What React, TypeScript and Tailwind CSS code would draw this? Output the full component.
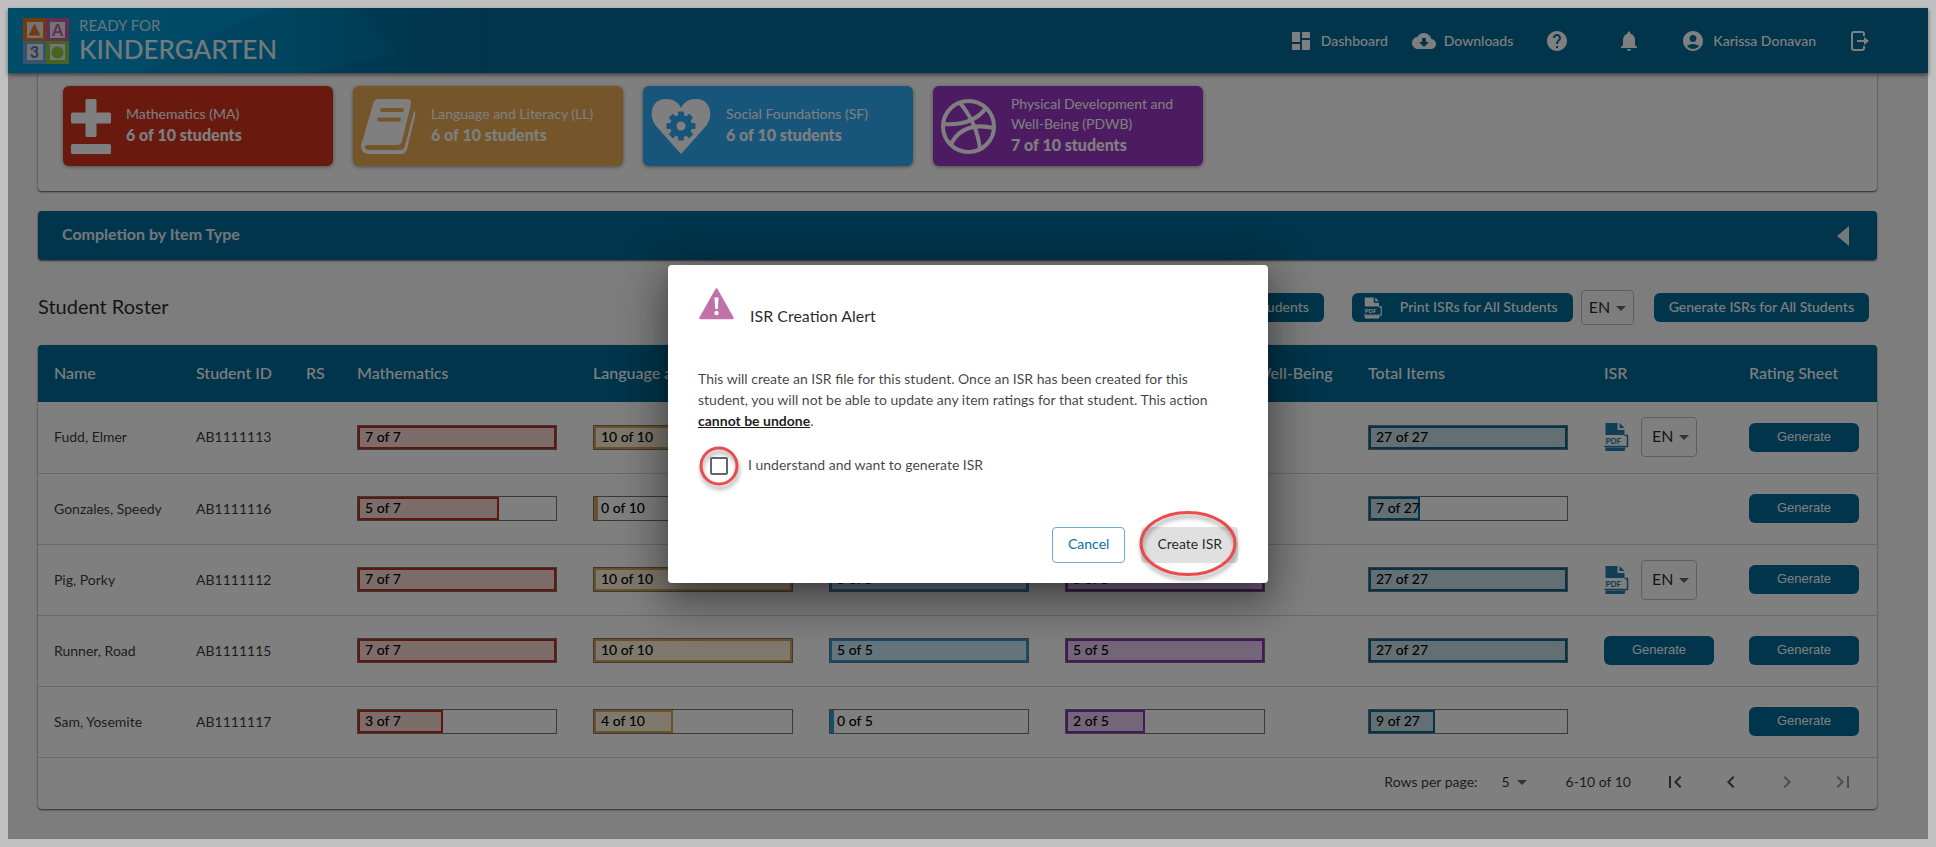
import { useState } from "react";
import {
  MdAccountCircle,
  MdArrowDropDown,
  MdChevronLeft,
  MdChevronRight,
  MdCloudDownload,
  MdDashboard,
  MdFirstPage,
  MdHelp,
  MdLastPage,
  MdNotifications,
} from "react-icons/md";

type Tone = "red" | "gold" | "sky" | "purple" | "navy";

const toneClass: Record<Tone, string> = {
  red: "border-[#bf311d] bg-[#f8d8d5]",
  gold: "border-[#dba350] bg-[#fdf0da]",
  sky: "border-[#2a9ad8] bg-[#cde8f9]",
  purple: "border-[#8a2fb8] bg-[#e6cdf3]",
  navy: "border-[#006a96] bg-[#c8dfe8]",
};

interface Student {
  name: string;
  id: string;
  scores: [number, number][];
  isr: "file" | "generate" | "none";
}

const students: Student[] = [
  { name: "Fudd, Elmer", id: "AB1111113", scores: [[7, 7], [10, 10], [5, 5], [5, 5], [27, 27]], isr: "file" },
  { name: "Gonzales, Speedy", id: "AB1111116", scores: [[5, 7], [0, 10], [0, 5], [2, 5], [7, 27]], isr: "none" },
  { name: "Pig, Porky", id: "AB1111112", scores: [[7, 7], [10, 10], [5, 5], [5, 5], [27, 27]], isr: "file" },
  { name: "Runner, Road", id: "AB1111115", scores: [[7, 7], [10, 10], [5, 5], [5, 5], [27, 27]], isr: "generate" },
  { name: "Sam, Yosemite", id: "AB1111117", scores: [[3, 7], [4, 10], [0, 5], [2, 5], [9, 27]], isr: "none" },
];

const tones: Tone[] = ["red", "gold", "sky", "purple", "navy"];

const columns = [
  { label: "Name", width: "" },
  { label: "Student ID", width: "w-[110px]" },
  { label: "RS", width: "w-[51px]" },
  { label: "Mathematics", width: "w-[236px]" },
  { label: "Language and Literacy", width: "w-[236px]" },
  { label: "Social Foundations", width: "w-[236px]" },
  { label: "Physical Development and Well-Being", width: "w-[303px]" },
  { label: "Total Items", width: "w-[236px]" },
  { label: "ISR", width: "w-[145px]" },
  { label: "Rating Sheet", width: "w-[144px]" },
];

function Logo() {
  return (
    <a href="#" className="flex items-center gap-[10px] text-white">
      <svg width="46" height="46" viewBox="0 0 46 46" aria-hidden="true">
        <rect width="23" height="23" fill="#e87722" />
        <rect x="23" width="23" height="23" fill="#c15fa5" />
        <rect y="23" width="23" height="23" fill="#6fa8dc" />
        <rect x="23" y="23" width="23" height="23" fill="#8dc63f" />
        <rect x="4" y="4" width="16" height="16" fill="#e8e8e8" />
        <rect x="27" y="4" width="15" height="16" fill="#e8e8e8" />
        <rect x="4" y="26" width="16" height="16" fill="#e8e8e8" />
        <rect x="27" y="26" width="15" height="16" fill="#e8e8e8" />
        <path d="M11.500 5.500 L17.500 17.500 H5.500 Z" fill="#e87722" />
        <circle cx="34.500" cy="34.500" r="6" fill="#8dc63f" />
        <text x="34.500" y="17.500" textAnchor="middle" fontSize="16" fontWeight="900" fill="#c15fa5">A</text>
        <text x="11.500" y="40" textAnchor="middle" fontSize="16" fontWeight="900" fill="#4a7fb5">3</text>
      </svg>
      <span className="flex flex-col pb-1">
        <span className="text-[15px] leading-5 text-white/80">READY FOR</span>
        <span className="text-[26px] leading-7 font-medium text-white/90">KINDERGARTEN</span>
      </span>
    </a>
  );
}

function LogoutIcon() {
  return (
    <svg width="24" height="24" viewBox="0 0 24 24" fill="none" stroke="currentColor" strokeWidth="2" aria-hidden="true">
      <path d="M16 7V5a2 2 0 0 0-2-2H6a2 2 0 0 0-2 2v14a2 2 0 0 0 2 2h8a2 2 0 0 0 2-2v-2" />
      <path d="M9 12h8" />
      <path d="M16 8l5 4-5 4z" fill="currentColor" stroke="none" />
    </svg>
  );
}

function Header() {
  return (
    <header className="relative flex h-[65px] items-center justify-between overflow-hidden bg-[#006a96] pl-[15px] pr-14 text-white shadow-[0_2px_4px_rgba(0,0,0,0.5)]">
      <svg className="absolute left-0 top-0 h-full w-[480px]" viewBox="0 0 480 65" preserveAspectRatio="none" aria-hidden="true">
        <defs>
          <linearGradient id="sheen" x1="0" x2="1">
            <stop offset="0" stopColor="#009ad6" />
            <stop offset="0.55" stopColor="#0092ca" />
            <stop offset="0.8" stopColor="#007aac" />
            <stop offset="1" stopColor="#006a96" />
          </linearGradient>
        </defs>
        <rect width="480" height="65" fill="url(#sheen)" />
        <path d="M205 25 L270 0 H480 V65 H130 L150 58 Z" fill="#006a96" opacity="0.2" />
        <path d="M350 0 L390 45 L300 65 H480 V0 Z" fill="#006a96" opacity="0.4" />
      </svg>
      <div className="relative">
        <Logo />
      </div>
      <nav className="relative flex items-center text-sm font-medium">
        <a href="#" className="mr-6 flex items-center gap-2">
          <MdDashboard size={24} />
          Dashboard
        </a>
        <a href="#" className="mr-8 flex items-center gap-2">
          <MdCloudDownload size={24} />
          Downloads
        </a>
        <button aria-label="Help" className="mr-12">
          <MdHelp size={24} />
        </button>
        <button aria-label="Notifications" className="mr-10">
          <MdNotifications size={24} />
        </button>
        <a href="#" className="mr-8 flex items-center gap-2">
          <MdAccountCircle size={24} />
          Karissa Donavan
        </a>
        <button aria-label="Log out">
          <LogoutIcon />
        </button>
      </nav>
    </header>
  );
}

function PlusMinusIcon() {
  return (
    <svg width="40" height="55" viewBox="0 0 40 55" fill="currentColor" aria-hidden="true">
      <rect x="14.500" width="11" height="38" rx="1.500" />
      <rect y="13.500" width="40" height="11" rx="1.500" />
      <rect y="45" width="40" height="10" rx="1.500" />
    </svg>
  );
}

function BookIcon() {
  return (
    <svg width="55" height="55" viewBox="0 0 55 55" aria-hidden="true">
      <path
        d="M18 0H46q5 0 4 5L41 42q-1 4-5 4H7q-4 0-3 3q1 2 4 2H39q4 0 5-4L53 12q2 1 1 5L46 50q-1 5-6 5H8Q0 55 0 46Q1 43 2 40L12 5Q13 0 18 0Z"
        fill="currentColor"
      />
      <path d="M21 11H41M18 20.500H38" stroke="#eaac54" strokeWidth="4" strokeLinecap="round" />
    </svg>
  );
}

function HeartGearIcon() {
  return (
    <svg width="60" height="55" viewBox="0 0 60 55" aria-hidden="true">
      <path d="M30 55 L5 27 C-3 17 0 0 15 0 C23 0 28 4 30 9 C32 4 37 0 45 0 C60 0 63 17 55 27 Z" fill="currentColor" />
      <g fill="#2eacf5">
        <circle cx="30" cy="27" r="11" />
        {[0, 45, 90, 135].map((deg) => (
          <rect key={deg} x="27" y="12.500" width="6" height="29" rx="1" transform={`rotate(${deg} 30 27)`} />
        ))}
      </g>
      <circle cx="30" cy="27" r="4.500" fill="currentColor" />
    </svg>
  );
}

function BallIcon() {
  return (
    <svg width="55" height="55" viewBox="0 0 55 55" fill="none" stroke="currentColor" strokeWidth="4" aria-hidden="true">
      <circle cx="27.500" cy="27.500" r="25.500" />
      <path d="M19 4 Q36 24 39 50" />
      <path d="M2 25 Q32 27 45 9" />
      <path d="M10 45 Q22 22 53 29" />
    </svg>
  );
}

const domains = [
  { label: "Mathematics (MA)", done: "6 of 10 students", bg: "bg-[#d2331d]", icon: <PlusMinusIcon /> },
  { label: "Language and Literacy (LL)", done: "6 of 10 students", bg: "bg-[#eaac54]", icon: <BookIcon /> },
  { label: "Social Foundations (SF)", done: "6 of 10 students", bg: "bg-[#2eacf5]", icon: <HeartGearIcon /> },
  { label: "Physical Development and Well-Being (PDWB)", done: "7 of 10 students", bg: "bg-[#9a36c4]", icon: <BallIcon /> },
];

function PdfIcon({ className }: { className: string }) {
  return (
    <svg viewBox="0 0 24 28" className={className} aria-hidden="true">
      <path d="M1 0H13V7H20V12H1Z" fill="currentColor" />
      <path d="M15 0L20 5H15Z" fill="currentColor" />
      <path d="M20 12.500H23V23.500H0" fill="none" stroke="currentColor" strokeWidth="1.500" />
      <path d="M1 24.500H21L20 28H1Z" fill="currentColor" />
      <text x="1" y="21" fontSize="8" fontWeight="900" fill="currentColor">PDF</text>
    </svg>
  );
}

function LanguageSelect({ label, className }: { label: string; className: string }) {
  return (
    <div className={`relative rounded border border-[#bdbdbd] ${className}`}>
      <select aria-label={label} className="h-full w-full appearance-none bg-transparent pb-0.5 text-base text-black/85">
        <option>EN</option>
        <option>ES</option>
      </select>
      <MdArrowDropDown size={24} className="pointer-events-none absolute top-1/2 right-0 -translate-y-1/2 text-black/60" />
    </div>
  );
}

function ScoreBar({ done, total, tone }: { done: number; total: number; tone: Tone }) {
  return (
    <div className="relative h-[25px] w-[200px] border border-[#757575]">
      <div className={`h-full min-w-1 border-2 ${toneClass[tone]}`} style={{ width: `${(done / total) * 100}%` }} />
      <span className="absolute inset-y-0 left-[7px] text-sm leading-[22px] font-medium text-black">
        {done} of {total}
      </span>
    </div>
  );
}

function GenerateButton() {
  return (
    <button className="h-[29px] w-[110px] rounded-md bg-[#006a96] font-['Liberation_Sans',sans-serif] text-[13px] text-white">
      Generate
    </button>
  );
}

function RosterTable() {
  return (
    <div className="rounded bg-white shadow-[0_1px_2px_rgba(0,0,0,0.7)]">
      <table className="w-full table-fixed text-left">
        <thead>
          <tr className="h-[57px] bg-[#006a96] text-base text-white">
            {columns.map((col, i) => (
              <th
                key={col.label}
                scope="col"
                className={`${col.width} pb-0.5 pl-4 font-medium whitespace-nowrap ${i === 0 ? "rounded-tl" : ""} ${i === columns.length - 1 ? "rounded-tr" : ""}`}
              >
                {col.label}
              </th>
            ))}
          </tr>
        </thead>
        <tbody>
          {students.map((student) => (
            <tr key={student.id} className="h-[71px] border-b border-[#d4d4d4] text-sm text-black/80">
              <td className="pl-4 whitespace-nowrap">{student.name}</td>
              <td className="pl-4">{student.id}</td>
              <td />
              {student.scores.map(([done, total], i) => (
                <td key={tones[i]} className="pl-4">
                  <ScoreBar done={done} total={total} tone={tones[i]} />
                </td>
              ))}
              <td className="pl-4">
                {student.isr === "file" && (
                  <div className="flex items-center gap-3">
                    <a href="#" aria-label={`ISR for ${student.name}`} className="text-[#1f7dab]">
                      <PdfIcon className="h-7 w-[25px]" />
                    </a>
                    <LanguageSelect label="ISR language" className="h-10 w-14 [&>select]:pl-[10px]" />
                  </div>
                )}
                {student.isr === "generate" && <GenerateButton />}
              </td>
              <td className="pl-4">
                <GenerateButton />
              </td>
            </tr>
          ))}
        </tbody>
      </table>
      <div className="flex h-[51px] items-center justify-end pr-[22px] pb-0.5 text-sm text-black/80">
        <label htmlFor="rows">Rows per page:</label>
        <div className="relative ml-6 w-8">
          <select id="rows" className="w-full appearance-none bg-transparent">
            <option>5</option>
            <option>10</option>
          </select>
          <MdArrowDropDown size={24} className="pointer-events-none absolute top-1/2 right-0 -translate-y-1/2 text-black/60" />
        </div>
        <span className="ml-8">6-10 of 10</span>
        <div className="ml-8 flex gap-8 text-black/70">
          <button aria-label="First page"><MdFirstPage size={24} /></button>
          <button aria-label="Previous page"><MdChevronLeft size={24} /></button>
          <button aria-label="Next page" disabled className="text-black/40"><MdChevronRight size={24} /></button>
          <button aria-label="Last page" disabled className="text-black/40"><MdLastPage size={24} /></button>
        </div>
      </div>
    </div>
  );
}

function IsrDialog() {
  const [agreed, setAgreed] = useState(false);

  return (
    <div
      role="dialog"
      aria-labelledby="isr-title"
      className="w-[600px] rounded bg-white px-[30px] pt-[23px] pb-5 text-sm shadow-[0_11px_15px_-7px_rgba(0,0,0,0.2),0_24px_38px_3px_rgba(0,0,0,0.14),0_9px_46px_8px_rgba(0,0,0,0.3)]"
    >
      <div className="flex items-start gap-4">
        <svg width="36" height="32" viewBox="-1 1 36 32" aria-hidden="true">
          <path d="M17.500 2.500 L33.500 31 H1.500 Z" fill="#c271a8" stroke="#c271a8" strokeWidth="2.500" strokeLinejoin="round" />
          <path d="M15.500 10.500h4l-.7 11.500h-2.600z" fill="#fff" />
          <circle cx="17.500" cy="26" r="2.200" fill="#fff" />
        </svg>
        <h2 id="isr-title" className="pt-4 text-base text-black/85">ISR Creation Alert</h2>
      </div>
      <p className="mt-10 leading-[21px] text-black/75">
        This will create an ISR file for this student. Once an ISR has been created for this student, you will not be
        able to update any item ratings for that student. This action{" "}
        <span className="font-bold text-black/90 underline">cannot be undone</span>.
      </p>
      <div className="mt-4 flex h-[38px] items-center gap-2">
        <span className="relative flex h-10 w-[42px] items-center justify-center">
          <input
            id="agree"
            type="checkbox"
            checked={agreed}
            onChange={(e) => setAgreed(e.target.checked)}
            className="size-[18px] appearance-none rounded-xs border-2 border-[#666] checked:bg-[#006a96]"
          />
          <svg className="pointer-events-none absolute inset-0 overflow-visible drop-shadow-[1px_4px_2px_rgba(0,0,0,0.35)]" viewBox="0 0 42 40" aria-hidden="true">
            <circle cx="21" cy="20" r="18" fill="none" stroke="#ea4b4e" strokeWidth="3" />
          </svg>
        </span>
        <label htmlFor="agree" className="pb-px text-black/75">I understand and want to generate ISR</label>
      </div>
      <div className="mt-[42px] flex justify-end gap-4">
        <button className="h-9 rounded border border-[#6aaed0] px-[15px] pb-0.5 text-[#0a6ea3]">Cancel</button>
        <span className="relative">
          <button disabled={!agreed} className="h-9 rounded bg-[#e0e0e0] px-4 pb-0.5 text-black/85">Create ISR</button>
          <svg className="pointer-events-none absolute -top-4 -left-0.5 h-[68px] w-[98px] overflow-visible drop-shadow-[1px_4px_2px_rgba(0,0,0,0.35)]" viewBox="0 0 98 68" aria-hidden="true">
            <ellipse cx="49" cy="32.500" rx="47" ry="31" fill="none" stroke="#ea4b4e" strokeWidth="3" />
          </svg>
        </span>
      </div>
    </div>
  );
}

export default function App() {
  return (
    <div className="min-h-screen bg-[#c0c0c0] p-2 font-['Lato',sans-serif]">
      <div className="relative min-h-[calc(100vh-16px)] bg-[#fafafa]">
        <Header />
        <main className="pr-[51px] pl-[30px]">
          <section className="flex flex-wrap gap-5 rounded-b bg-white px-[25px] pt-[13px] pb-[25px] shadow-[0_1px_2px_rgba(0,0,0,0.7)]">
            {domains.map((d) => (
              <div key={d.label} className={`flex h-20 w-[270px] items-center gap-[15px] rounded-md px-2 text-white shadow-[0_1px_4px_rgba(0,0,0,0.4)] ${d.bg}`}>
                <span className="shrink-0">{d.icon}</span>
                <div className="pb-0.5">
                  <div className="text-sm">{d.label}</div>
                  <div className="text-base leading-[22px] font-black">{d.done}</div>
                </div>
              </div>
            ))}
          </section>

          <button className="mt-5 flex h-[49px] w-full items-center justify-between rounded bg-[#006a96] pr-7 pl-6 text-base font-bold text-white/90 shadow-[0_1px_2px_rgba(0,0,0,0.6)]">
            <span className="pb-1">Completion by Item Type</span>
            <svg width="12" height="20" viewBox="0 0 12 20" fill="currentColor" aria-hidden="true">
              <path d="M12 0V20L0 10Z" />
            </svg>
          </button>

          <div className="mt-[30px] mb-5 flex h-[35px] items-center pr-2">
            <h1 className="mr-auto pb-1 text-xl text-black/85">Student Roster</h1>
            <div className="flex items-center text-sm font-medium text-white">
              <button className="mr-7 h-[29px] rounded-md bg-[#006a96] px-[15px] pb-0.5">Print Rating Sheets for All Students</button>
              <button className="mr-2 flex h-[29px] items-center gap-[18px] rounded-md bg-[#006a96] pr-[15px] pl-3">
                <PdfIcon className="h-[22px] w-[18px]" />
                <span className="pb-0.5">Print ISRs for All Students</span>
              </button>
              <LanguageSelect label="Print language" className="mr-5 h-[35px] w-[53px] font-normal [&>select]:pl-[7px]" />
              <button className="h-[29px] rounded-md bg-[#006a96] px-[15px] pb-0.5">Generate ISRs for All Students</button>
            </div>
          </div>

          <RosterTable />
        </main>

        <div className="absolute inset-0 flex items-center justify-center bg-black/50">
          <IsrDialog />
        </div>
      </div>
    </div>
  );
}
